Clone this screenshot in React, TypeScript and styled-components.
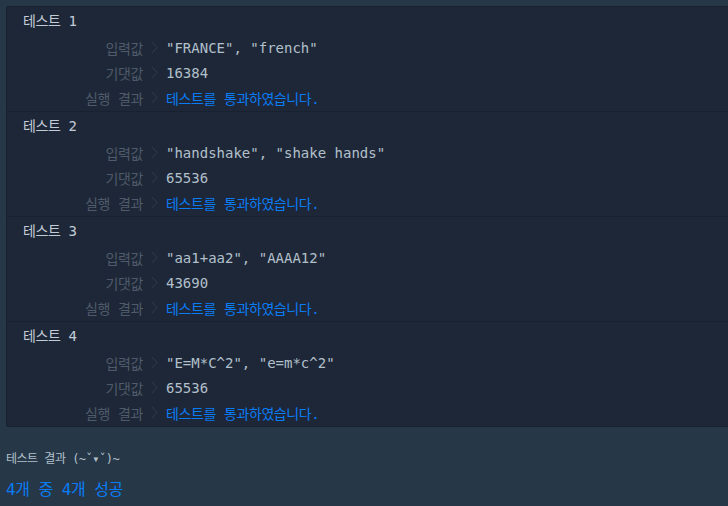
import React from "react";
import styled, { createGlobalStyle } from "styled-components";

const Global = createGlobalStyle`
  html, body { margin: 0; padding: 0; background: #263747; overflow: hidden; }
  body { font-family: "DejaVu Sans Mono", "Noto Sans CJK KR", monospace; }
`;

const Page = styled.div`
  padding: 6px 0 0 6px;
  width: 728px;
  height: 506px;
  box-sizing: border-box;
  overflow: hidden;
`;

const Panel = styled.div`
  width: 740px;
  background: #1e2737;
  border: 1px solid #172130;
  border-radius: 2px;
`;

const Block = styled.div`
  padding: 4px 0 1px;
  border-bottom: 1px solid #172130;
  &:last-child { border-bottom: none; }
`;

const Title = styled.div`
  height: 20px;
  line-height: 20px;
  padding-left: 16px;
  margin-bottom: 4px;
  color: #c2ccd6;
  font-size: 14px;
  letter-spacing: -0.4px;
  font-family: "DejaVu Sans Mono", "Noto Sans CJK KR", monospace;
`;

const Row = styled.div`
  display: flex;
  align-items: center;
  height: 25px;
`;

const Label = styled.div`
  width: 136px;
  text-align: right;
  color: #4f5b6a;
  font-size: 14px;
  letter-spacing: -0.4px;
  font-family: "DejaVu Sans Mono", "Noto Sans CJK KR", monospace;
`;

const Chev = styled.div`
  width: 23px;
  display: flex;
  justify-content: center;
  align-items: center;
`;

const Value = styled.div<{ $ok?: boolean }>`
  color: ${(p) => (p.$ok ? "#0a7cf5" : "#b2c0cc")};
  font-size: 14px;
  letter-spacing: ${(p) => (p.$ok ? "-0.4px" : "0")};
  font-family: "DejaVu Sans Mono", "Noto Sans CJK KR", monospace;
  white-space: pre;
`;

const Summary = styled.div`
  margin-top: 24px;
  color: #b2c0cc;
  font-size: 12px;
  letter-spacing: -0.5px;
  line-height: 16px;
`;

const Score = styled.div`
  margin-top: 12px;
  color: #0a7cf5;
  font-size: 16px;
  letter-spacing: -0.5px;
  line-height: 22px;
`;

const Chevron = () => (
  <svg width="7" height="13" viewBox="0 0 7 13">
    <polyline points="1,1 6,6.5 1,12" fill="none" stroke="#313c4b" strokeWidth="1" />
  </svg>
);

const tests = [
  { input: '"FRANCE", "french"', expected: "16384" },
  { input: '"handshake", "shake hands"', expected: "65536" },
  { input: '"aa1+aa2", "AAAA12"', expected: "43690" },
  { input: '"E=M*C^2", "e=m*c^2"', expected: "65536" },
];

export default function App() {
  return (
    <Page>
      <Global />
      <Panel>
        {tests.map((t, i) => (
          <Block key={i}>
            <Title>테스트 {i + 1}</Title>
            <Row>
              <Label>입력값</Label>
              <Chev><Chevron /></Chev>
              <Value>{t.input}</Value>
            </Row>
            <Row>
              <Label>기댓값</Label>
              <Chev><Chevron /></Chev>
              <Value>{t.expected}</Value>
            </Row>
            <Row>
              <Label>실행 결과</Label>
              <Chev><Chevron /></Chev>
              <Value $ok>테스트를 통과하였습니다.</Value>
            </Row>
          </Block>
        ))}
      </Panel>
      <Summary>테스트 결과 (~ˇ▾ˇ)~</Summary>
      <Score>4개 중 4개 성공</Score>
    </Page>
  );
}
